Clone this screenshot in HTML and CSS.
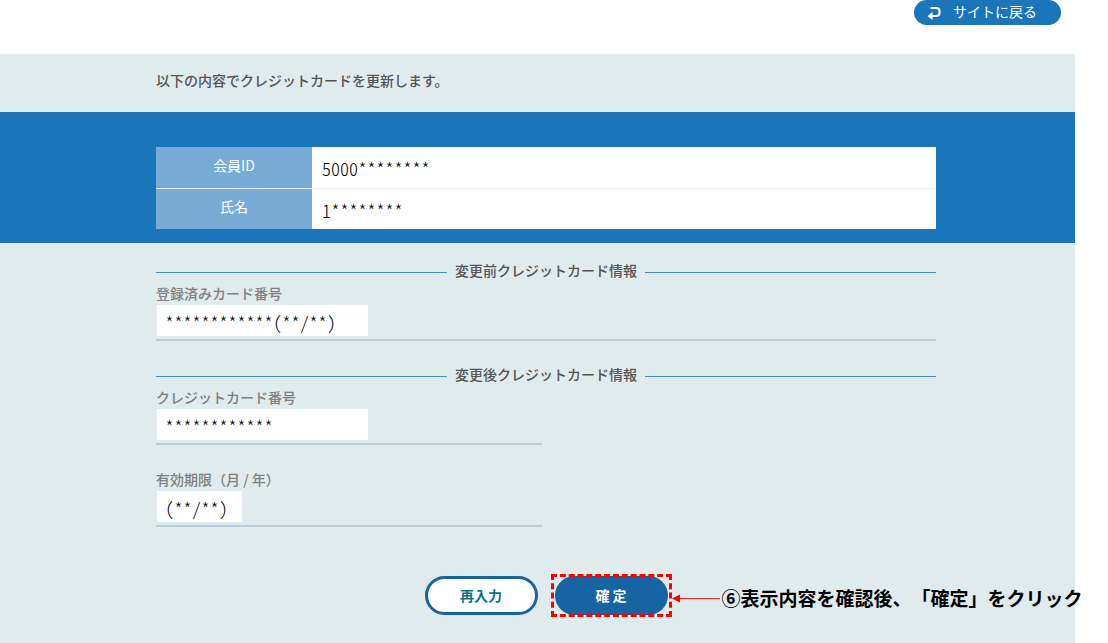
FILE: index.html
```html
<!DOCTYPE html>
<html lang="ja">
<head>
<meta charset="utf-8">
<title>クレジットカード更新 確認</title>
<link rel="stylesheet" href="styles.css">
</head>
<body>
<header class="site-header">
  <a class="back-link" href="#">
    <svg class="back-icon" viewBox="0 0 14 14" aria-hidden="true"><path class="stroke" d="M3.5 2H9Q12.5 2 12.5 5V7Q12.5 10 9 10H4"/><path class="head" d="M0.5 10L5.5 6V14Z"/></svg>
    サイトに戻る
  </a>
</header>
<main class="page">
  <p class="lead">以下の内容でクレジットカードを更新します。</p>
  <section class="member">
    <table class="member-table">
      <tr><th scope="row">会員ID</th><td>5000********</td></tr>
      <tr><th scope="row">氏名</th><td>1********</td></tr>
    </table>
  </section>
  <form class="card-form">
    <section class="group">
      <h2 class="group-title">変更前クレジットカード情報</h2>
      <div class="field">
        <label for="old-card">登録済みカード番号</label>
        <input id="old-card" class="value" type="text" value="************(**/**)" readonly>
      </div>
    </section>
    <section class="group">
      <h2 class="group-title">変更後クレジットカード情報</h2>
      <div class="field field-half">
        <label for="new-card">クレジットカード番号</label>
        <input id="new-card" class="value" type="text" value="************" readonly>
      </div>
      <div class="field field-half">
        <label for="expiry">有効期限（月 / 年）</label>
        <input id="expiry" class="value value-short" type="text" value="(**/**)" readonly>
      </div>
    </section>
    <div class="actions">
      <button class="btn btn-retry" type="button">再入力</button>
      <div class="marked">
        <button class="btn btn-confirm" type="submit">確 定</button>
        <div class="callout">
          <svg class="arrow" viewBox="0 0 48 10" aria-hidden="true"><path class="arrow-line" d="M6 5.5H48"/><path class="arrow-head" d="M0 5.5L8 1.5V9.5Z"/></svg>
          <span>⑥表示内容を確認後、「確定」をクリック</span>
        </div>
      </div>
    </div>
  </form>
</main>
</body>
</html>
```
FILE: styles.css
```css
* { box-sizing: border-box; }
html { background: #fff; }
body {
  margin: 0;
  min-height: 100vh;
  display: flex;
  flex-direction: column;
  padding-right: 33px;
  overflow: hidden;
  font-family: "Noto Sans CJK JP", "Noto Sans", sans-serif;
  font-size: 14px;
  line-height: 20px;
  color: #555;
}
.site-header {
  display: flex;
  justify-content: flex-end;
  align-items: flex-start;
  height: 54px;
  padding-right: 14px;
}
.back-link {
  display: flex;
  align-items: center;
  gap: 12px;
  height: 25px;
  padding: 0 24px 3px 13px;
  border-radius: 13px;
  background: #1b75bb;
  color: #fff;
  font-weight: 400;
  text-decoration: none;
}
.back-icon { width: 14px; height: 14px; margin-top: 3px; }
.back-icon .stroke { fill: none; stroke: #fff; stroke-width: 2; }
.back-icon .head { fill: #fff; }
.page {
  flex: 1;
  background: #e0ebed;
}
.lead {
  margin: 0;
  padding: 16px 139px 22px 156px;
  font-weight: 500;
}
.member {
  padding: 35px 139px 14px 156px;
  background: #1b75bb;
}
.member-table {
  width: 100%;
  border-collapse: collapse;
  background: #fff;
}
.member-table th {
  width: 20%;
  height: 41px;
  padding: 0 0 5px;
  background: #77abd6;
  color: #fff;
  font-weight: 400;
}
.member-table td,
.value {
  color: #000;
  font: 300 18px/22px "Noto Sans CJK JP", monospace;
  font-feature-settings: "hwid";
}
.member-table td { padding: 2px 10px 0; }
.member-table tr + tr > * { border-top: 1px solid #e8f1f8; }
.card-form { padding: 17px 139px 20px 156px; }
.group + .group { margin-top: 23px; }
.group-title {
  display: flex;
  align-items: center;
  gap: 8px;
  margin: 0;
  font-size: 14px;
  font-weight: 500;
}
.group-title::before,
.group-title::after {
  content: "";
  flex: 1;
  height: 1px;
  margin-top: 4px;
  background: #428ec9;
}
.field {
  display: flex;
  flex-direction: column;
  align-items: flex-start;
  margin-top: 3px;
  padding: 0 0 3px 1px;
  border-bottom: 2px solid #b9ced6;
}
.field label {
  margin: 0 0 2px -1px;
  color: #808080;
  font-weight: 500;
}
.field-half { width: 386px; max-width: 100%; }
.field + .field { margin-top: 24px; }
.value {
  width: 211px;
  height: 31px;
  padding: 3px 8px 0;
  border: 0;
  background: #fff;
}
.value-short { width: 85px; }
.actions {
  display: flex;
  justify-content: center;
  gap: 13px;
  margin-top: 47px;
  padding-left: 4px;
}
.btn {
  width: 113px;
  height: 39px;
  padding: 0 0 2px;
  border: 3px solid #1764a2;
  border-radius: 20px;
  font: bold 14px/20px "Noto Sans CJK JP", sans-serif;
}
.actions > .btn { margin-top: 2px; }
.btn-retry { background: #fff; color: #087390; }
.btn-confirm { background: #1764a2; color: #fff; }
.marked {
  position: relative;
  padding: 2px 4px;
}
.marked::after {
  content: "";
  position: absolute;
  inset: 0;
  border: 3px dashed #f00;
  pointer-events: none;
}
.callout {
  position: absolute;
  left: 100%;
  top: 0;
  bottom: 0;
  display: flex;
  align-items: center;
  gap: 2px;
  padding-top: 4px;
  white-space: nowrap;
  color: #000;
  font-size: 19px;
  font-weight: bold;
  text-spacing-trim: space-all;
}
.arrow { width: 48px; height: 10px; }
.arrow-line { fill: none; stroke: #f22; }
.arrow-head { fill: #f00; }
```
